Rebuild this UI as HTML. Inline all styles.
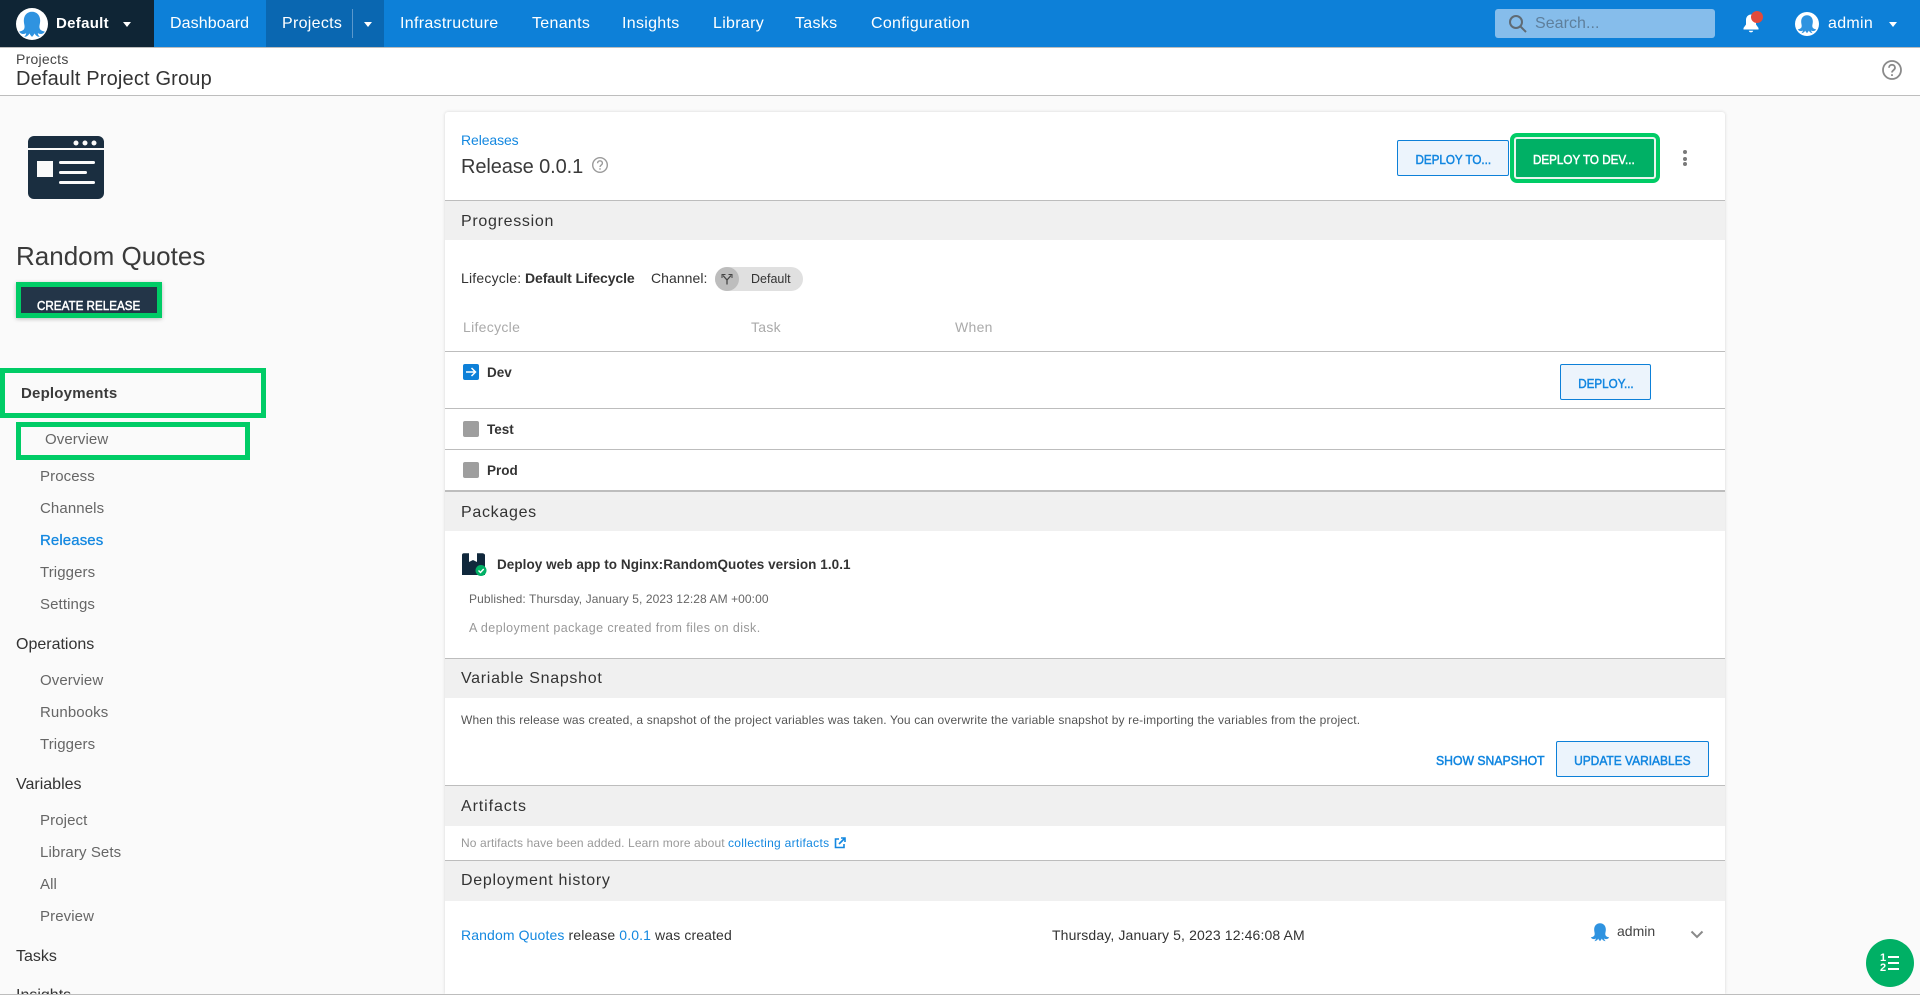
<!DOCTYPE html>
<html lang="en"><head><meta charset="utf-8"><title>Release 0.0.1</title>
<style>
*{box-sizing:border-box}
html,body{margin:0;padding:0;width:1920px;height:995px;overflow:hidden;background:#fafafa;font-family:"Liberation Sans",Arial,sans-serif;color:#333}
.a{position:absolute}
.t{position:absolute;white-space:nowrap;line-height:20px;height:20px}
.nav{color:#fff;font-size:16px;top:14px;letter-spacing:.3px}
.side{font-size:15px;color:#666;left:40px;letter-spacing:.1px}
.head{font-size:16px;color:#333;left:16px}
.band{position:absolute;left:445px;width:1280px;background:#f0f0f0;height:39px}
.line{position:absolute;left:445px;width:1280px;height:1px;background:#bdbdbd}
.bt{font-size:16px;letter-spacing:.7px;left:461px;color:#333}
.btn{position:absolute;background:#ecf4fc;border:1px solid #0d80d8;border-radius:2px;height:36px;color:#1286e0;font-size:13px;text-align:center;line-height:37px;white-space:nowrap;-webkit-text-stroke:.5px #1286e0}
.btn span,.sc{display:inline-block;transform:scaleX(.895)}
.sc{transform-origin:left center;font-size:13px;-webkit-text-stroke:.5px currentColor}
.bx{position:absolute;border:5px solid #00cc66}
a{color:#1488e0;text-decoration:none}
.st{font-size:13.500px;font-weight:bold;left:487px;color:#333}
.sq{position:absolute;left:463px;width:16px;height:16px;background:#9e9e9e;border-radius:2px}
</style></head><body>
<svg width="0" height="0" style="position:absolute"><defs>
<symbol id="oct" viewBox="0 0 24 24"><path d="M12 1.500C7.500 1.500 5 5 5 9c0 3 1 4.500.5 6.500-.5 2-2.500 2.500-4.500 3 .8 1.500 2.500 2.300 4.300 2 .9-.2 1.200-.5 1.700-.7 0 1.200-.7 2.200-1.700 3.200 2.200 0 3.900-1.500 4.500-3 .4.8 1 1.800 2.200 3 1.200-1.200 1.800-2.200 2.200-3 .6 1.500 2.300 3 4.500 3-1-1-1.700-2-1.700-3.200.5.2.8.5 1.700.7 1.800.3 3.500-.5 4.300-2-2-.5-4-1-4.500-3-.5-2 .5-3.500.5-6.500 0-4-2.500-7.500-7-7.500z"/></symbol>
</defs></svg>

<!-- top bar -->
<div class="a" style="left:0;top:0;width:1920px;height:47px;background:#0d80d8"></div>
<div class="a" style="left:0;top:47px;width:1920px;height:1px;background:#bdbdbd"></div>
<div class="a" style="left:0;top:0;width:154px;height:47px;background:#0f2535"></div>
<div class="a" style="left:266px;top:0;width:118px;height:47px;background:#0a67b1"></div>
<div class="a" style="left:352px;top:9px;width:1px;height:29px;background:#5b98cc"></div>
<div class="a" style="left:16px;top:8px;width:32px;height:32px;border-radius:50%;background:#fff"></div>
<svg class="a" style="left:18px;top:10px" width="28" height="28" fill="#2f93e0"><use href="#oct"/></svg>
<div class="t nav" style="left:56px;font-weight:bold;font-size:15px;letter-spacing:.3px">Default</div>
<div class="a" style="left:123px;top:22px;border:4.500px solid transparent;border-top:5px solid #fff;border-bottom:0"></div>
<div class="t nav" style="left:170px;letter-spacing:.1px">Dashboard</div>
<div class="t nav" style="left:282px">Projects</div>
<div class="a" style="left:364px;top:22px;border:4.500px solid transparent;border-top:5px solid #fff;border-bottom:0"></div>
<div class="t nav" style="left:400px">Infrastructure</div>
<div class="t nav" style="left:532px">Tenants</div>
<div class="t nav" style="left:622px">Insights</div>
<div class="t nav" style="left:713px">Library</div>
<div class="t nav" style="left:795px">Tasks</div>
<div class="t nav" style="left:871px">Configuration</div>
<div class="a" style="left:1495px;top:9px;width:220px;height:29px;background:#86bdeb;border-radius:3px"></div>
<svg class="a" style="left:1508px;top:14px" width="20" height="20" fill="none" stroke="#5f6b75" stroke-width="2"><circle cx="8" cy="8" r="6"/><path d="M12.500 12.500l5.500 5.500"/></svg>
<div class="t" style="left:1535px;top:14px;font-size:16px;color:#5e7f9c;letter-spacing:.05px">Search...</div>
<svg class="a" style="left:1742px;top:13px" width="18" height="21" fill="#fff"><path d="M9 1.500c-3 0-5 2.500-5 5.500v4.500L1.500 15v1.500h15V15L14 11.500V7c0-3-2-5.500-5-5.500z"/><path d="M6.800 17.800a2.300 2.300 0 0 0 4.400 0z"/></svg>
<div class="a" style="left:1751px;top:11px;width:12px;height:12px;border-radius:50%;background:#e24a3c"></div>
<div class="a" style="left:1795px;top:12px;width:24px;height:24px;border-radius:50%;background:#fff"></div>
<svg class="a" style="left:1797px;top:14px" width="20" height="20" fill="#2f93e0"><use href="#oct"/></svg>
<div class="t nav" style="left:1828px;letter-spacing:.3px">admin</div>
<div class="a" style="left:1889px;top:22px;border:4.500px solid transparent;border-top:5px solid #fff;border-bottom:0"></div>

<!-- sub header -->
<div class="a" style="left:0;top:48px;width:1920px;height:47px;background:#fff"></div>
<div class="a" style="left:0;top:95px;width:1920px;height:1px;background:#bdbdbd"></div>
<div class="t" style="left:16px;top:49px;font-size:14px;color:#444;letter-spacing:.25px">Projects</div>
<div class="t" style="left:16px;top:69px;font-size:20px;letter-spacing:.17px;color:#333">Default Project Group</div>
<svg class="a" style="left:1881px;top:59px" width="22" height="22" fill="none" stroke="#8a8a8a" stroke-width="1.800"><circle cx="11" cy="11" r="9"/><path d="M8 8.800c0-4 6-4 6 0 0 2.400-3 2.400-3 4.700" /><path d="M11 15.200v1.800"/></svg>

<!-- sidebar -->
<svg class="a" style="left:28px;top:136px" width="76" height="63"><rect width="76" height="63" rx="6" fill="#1a2e40"/><rect y="12" width="76" height="2" fill="#fafafa"/><circle cx="48" cy="7" r="2.500" fill="#fafafa"/><circle cx="57" cy="7" r="2.500" fill="#fafafa"/><circle cx="66" cy="7" r="2.500" fill="#fafafa"/><rect x="9" y="25" width="16" height="16" fill="#fafafa"/><rect x="31" y="25" width="36" height="3" rx="1.500" fill="#fafafa"/><rect x="31" y="35" width="28" height="3" rx="1.500" fill="#fafafa"/><rect x="31" y="45" width="36" height="3" rx="1.500" fill="#fafafa"/></svg>
<div class="t" style="left:16px;top:246px;font-size:26px;color:#3a3a3a">Random Quotes</div>
<div class="a" style="left:16px;top:282px;width:146px;height:36px;background:#233548;box-shadow:0 1px 4px rgba(0,0,0,.25)"></div>
<div class="bx" style="left:16px;top:282px;width:146px;height:36px"></div>
<div class="t sc" style="left:37px;top:296px;color:#fff">CREATE RELEASE</div>
<div class="bx" style="left:0;top:368px;width:266px;height:50px"></div>
<div class="t" style="left:21px;top:384px;font-size:15px;font-weight:bold;color:#3a3a3a;letter-spacing:.2px">Deployments</div>
<div class="bx" style="left:16px;top:422px;width:234px;height:38px"></div>
<div class="t side" style="left:45px;top:430px">Overview</div>
<div class="t side" style="top:467px">Process</div>
<div class="t side" style="top:499px">Channels</div>
<div class="t side" style="top:531px;color:#1488e0;-webkit-text-stroke:.3px #1488e0">Releases</div>
<div class="t side" style="top:563px">Triggers</div>
<div class="t side" style="top:595px">Settings</div>
<div class="t head" style="top:635px">Operations</div>
<div class="t side" style="top:671px">Overview</div>
<div class="t side" style="top:703px">Runbooks</div>
<div class="t side" style="top:735px">Triggers</div>
<div class="t head" style="top:775px">Variables</div>
<div class="t side" style="top:811px">Project</div>
<div class="t side" style="top:843px">Library Sets</div>
<div class="t side" style="top:875px">All</div>
<div class="t side" style="top:907px">Preview</div>
<div class="t head" style="top:947px">Tasks</div>
<div class="t head" style="top:986px;height:8px;overflow:hidden">Insights</div>

<!-- card -->
<div class="a" style="left:445px;top:112px;width:1280px;height:882px;background:#fff;border-radius:3px 3px 0 0;box-shadow:0 0 3px rgba(0,0,0,.15)"></div>
<div class="t" style="left:461px;top:130px;font-size:14px;letter-spacing:-.1px"><a>Releases</a></div>
<div class="t" style="left:461px;top:157px;font-size:20px;letter-spacing:-.1px;color:#3a3a3a">Release 0.0.1</div>
<svg class="a" style="left:591px;top:156px" width="18" height="18" fill="none" stroke="#9a9a9a" stroke-width="1.400"><circle cx="9" cy="9" r="7.300"/><path d="M6.600 7.200c0-3.200 4.800-3.200 4.800 0 0 1.900-2.400 1.900-2.400 3.800"/><path d="M9 12.200v1.500"/></svg>
<div class="btn" style="left:1397px;top:140px;width:112px"><span>DEPLOY TO...</span></div>
<div class="a" style="left:1510px;top:133px;width:150px;height:50px;border-radius:7px;background:#00cc66"></div>
<div class="a" style="left:1514px;top:137px;width:142px;height:42px;border-radius:3px;background:#00b065;border:2px solid #e8f5ee"></div>
<div class="t sc" style="left:1533px;top:150px;color:#fff">DEPLOY TO DEV...</div>
<div class="a" style="left:1683px;top:150px;width:4px;height:4px;border-radius:50%;background:#7a7a7a"></div>
<div class="a" style="left:1683px;top:157px;width:4px;height:4px;border-radius:50%;background:#7a7a7a"></div>
<div class="a" style="left:1683px;top:162px;width:4px;height:4px;border-radius:50%;background:#7a7a7a"></div>

<div class="line" style="top:200px"></div>
<div class="band" style="top:201px"></div>
<div class="t bt" style="top:212px">Progression</div>
<div class="t" style="left:461px;top:268px;font-size:14px;letter-spacing:.2px">Lifecycle:</div>
<div class="t" style="left:525px;top:268px;font-size:14px;font-weight:bold;letter-spacing:-.1px">Default Lifecycle</div>
<div class="t" style="left:651px;top:268px;font-size:14px;letter-spacing:.05px">Channel:</div>
<div class="a" style="left:715px;top:267px;width:88px;height:24px;border-radius:12px;background:#e0e0e0"></div>
<div class="a" style="left:715px;top:267px;width:24px;height:24px;border-radius:50%;background:#bdbdbd"></div>
<svg class="a" style="left:721px;top:273px" width="12" height="12" fill="none" stroke="#444" stroke-width="1.300"><path d="M6 11.500V7L2 2.500M6 7l4-4.500"/><path d="M1 5V1.500h3.500M7.500 1.500H11V5" stroke-width="1"/></svg>
<div class="t" style="left:751px;top:269px;font-size:12.500px">Default</div>
<div class="t" style="left:463px;top:317px;font-size:14px;letter-spacing:.3px;color:#aaa">Lifecycle</div>
<div class="t" style="left:751px;top:317px;font-size:14px;letter-spacing:.3px;color:#aaa">Task</div>
<div class="t" style="left:955px;top:317px;font-size:14px;letter-spacing:.3px;color:#aaa">When</div>
<div class="line" style="top:351px"></div>
<div class="sq" style="top:364px;background:#0d80d8"></div>
<svg class="a" style="left:463px;top:364px" width="16" height="16" fill="none" stroke="#fff" stroke-width="1.500"><path d="M3 8h9.500M8.500 4l4 4-4 4"/></svg>
<div class="t st" style="top:363px">Dev</div>
<div class="btn" style="left:1560px;top:364px;width:91px"><span>DEPLOY...</span></div>
<div class="line" style="top:408px"></div>
<div class="sq" style="top:421px"></div>
<div class="t st" style="top:420px">Test</div>
<div class="line" style="top:449px"></div>
<div class="sq" style="top:462px"></div>
<div class="t st" style="top:461px">Prod</div>
<div class="line" style="top:490px;height:2px"></div>
<div class="band" style="top:492px"></div>
<div class="t bt" style="top:503px">Packages</div>
<svg class="a" style="left:461px;top:552px" width="27" height="25"><path d="M1 3c0-1 .7-1.800 1.800-1.800H8V10l4-2 4 2V1.200h5.200C22.300 1.200 24 2 24 3v20H1z" fill="#10283c"/><circle cx="20" cy="18.500" r="5.500" fill="#00b065"/><path d="M17.500 18.500l2 2 3.200-3.500" fill="none" stroke="#fff" stroke-width="1.400"/></svg>
<div class="t" style="left:497px;top:555px;font-size:13.500px;font-weight:bold;letter-spacing:.05px;color:#333">Deploy web app to Nginx:RandomQuotes version 1.0.1</div>
<div class="t" style="left:469px;top:589px;font-size:12px;color:#666;letter-spacing:.08px">Published: Thursday, January 5, 2023 12:28 AM +00:00</div>
<div class="t" style="left:469px;top:618px;font-size:12.500px;color:#999;letter-spacing:.4px">A deployment package created from files on disk.</div>
<div class="line" style="top:658px"></div>
<div class="band" style="top:659px"></div>
<div class="t bt" style="top:669px">Variable Snapshot</div>
<div class="t" style="left:461px;top:710px;font-size:12px;color:#555;letter-spacing:.15px">When this release was created, a snapshot of the project variables was taken. You can overwrite the variable snapshot by re-importing the variables from the project.</div>
<div class="t sc" style="left:1436px;top:751px;color:#1286e0;transform:scaleX(.94)">SHOW SNAPSHOT</div>
<div class="btn" style="left:1556px;top:741px;width:153px"><span style="transform:scaleX(.92)">UPDATE VARIABLES</span></div>
<div class="line" style="top:785px"></div>
<div class="band" style="top:786px;height:40px"></div>
<div class="t bt" style="top:797px;letter-spacing:.9px">Artifacts</div>
<div class="t" style="left:461px;top:833px;font-size:12px;color:#999;letter-spacing:.12px">No artifacts have been added. Learn more about</div>
<div class="t" style="left:728px;top:833px;font-size:12px;letter-spacing:.3px"><a>collecting artifacts</a></div>
<svg class="a" style="left:834px;top:837px" width="12" height="12" fill="none" stroke="#1488e0" stroke-width="1.600"><path d="M5 2H1.500v8.500H10V7"/><path d="M5 7l5.500-5.500M7 1h4v4"/></svg>
<div class="line" style="top:860px"></div>
<div class="band" style="top:861px;height:40px"></div>
<div class="t bt" style="top:871px">Deployment history</div>
<div class="t" style="left:461px;top:925px;font-size:14px;letter-spacing:.12px"><a>Random Quotes</a> release <a>0.0.1</a> was created</div>
<div class="t" style="left:1052px;top:925px;font-size:14px;color:#333;letter-spacing:.13px">Thursday, January 5, 2023 12:46:08 AM</div>
<svg class="a" style="left:1590px;top:922px" width="20" height="20" fill="#2f93e0"><use href="#oct"/></svg>
<div class="t" style="left:1617px;top:921px;font-size:14px;color:#444">admin</div>
<svg class="a" style="left:1690px;top:930px" width="14" height="10" fill="none" stroke="#8a8a8a" stroke-width="2"><path d="M1.500 1.500L7 7l5.500-5.500"/></svg>

<!-- fab -->
<div class="a" style="left:1866px;top:939px;width:48px;height:48px;border-radius:50%;background:#00b065"></div>
<div class="t" style="left:1880px;top:948px;font-size:11px;font-weight:bold;color:#fff">1</div>
<div class="t" style="left:1880px;top:958px;font-size:11px;font-weight:bold;color:#fff">2</div>
<div class="a" style="left:1888px;top:956px;width:11px;height:2px;background:#fff"></div>
<div class="a" style="left:1888px;top:962px;width:11px;height:2px;background:#fff"></div>
<div class="a" style="left:1888px;top:968px;width:11px;height:2px;background:#fff"></div>

<div class="a" style="left:0;top:994px;width:1920px;height:1px;background:#bdbdbd"></div>
</body></html>
